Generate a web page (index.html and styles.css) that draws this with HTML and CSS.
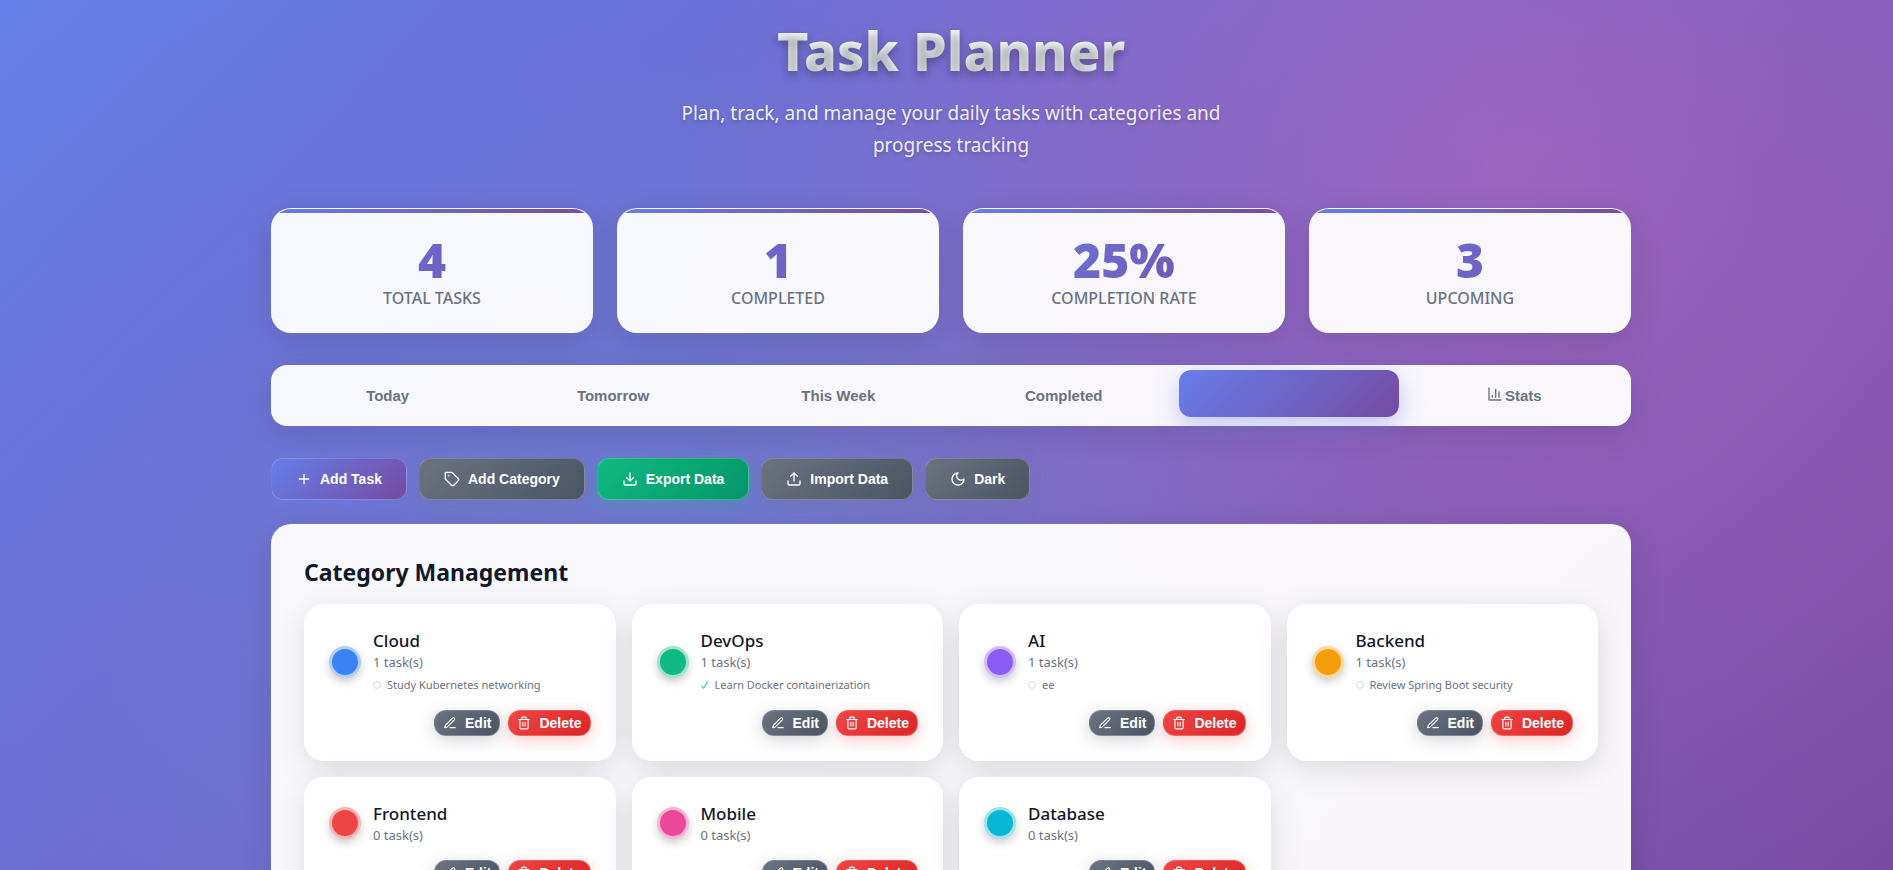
FILE: index.html
```html
<!DOCTYPE html>
<html lang="en">
<head>
<meta charset="utf-8">
<title>Task Planner</title>
<link rel="stylesheet" href="styles.css">
</head>
<body>
<svg class="sprite" aria-hidden="true">
  <symbol id="plus" viewBox="0 0 24 24"><path d="M5 12h14M12 5v14"/></symbol>
  <symbol id="tag" viewBox="0 0 24 24"><path d="M12.6 2.6A2 2 0 0 0 11.2 2H3a1 1 0 0 0-1 1v8.2a2 2 0 0 0 .6 1.4l8.7 8.7a2.4 2.4 0 0 0 3.4 0l6.6-6.6a2.4 2.4 0 0 0 0-3.4z"/><circle cx="7" cy="7" r=".4"/></symbol>
  <symbol id="download" viewBox="0 0 24 24"><path d="M12 3v12M7 10l5 5 5-5M3 15v4a2 2 0 0 0 2 2h14a2 2 0 0 0 2-2v-4"/></symbol>
  <symbol id="upload" viewBox="0 0 24 24"><path d="M12 15V3M7 8l5-5 5 5M3 15v4a2 2 0 0 0 2 2h14a2 2 0 0 0 2-2v-4"/></symbol>
  <symbol id="moon" viewBox="0 0 24 24"><path d="M12 3a6 6 0 0 0 9 9 9 9 0 1 1-9-9Z"/></symbol>
  <symbol id="pen" viewBox="0 0 24 24"><path d="M12 20h9M16.5 3.5a2.1 2.1 0 0 1 3 3L7 19l-4 1 1-4z"/></symbol>
  <symbol id="trash" viewBox="0 0 24 24"><path d="M3 6h18M19 6v14a2 2 0 0 1-2 2H7a2 2 0 0 1-2-2V6M8 6V4a2 2 0 0 1 2-2h4a2 2 0 0 1 2 2v2M10 11v6M14 11v6"/></symbol>
  <symbol id="chart" viewBox="0 0 24 24"><path d="M3 3v18h18M18 17V9M13 17V5M8 17v-3"/></symbol>
  <symbol id="ring" viewBox="0 0 8 8"><circle cx="4" cy="4" r="3.4"/></symbol>
  <symbol id="check" viewBox="0 0 8 8"><path d="M1 4.8 2.6 7.4 6.6.6"/></symbol>
</svg>
<div class="container">
  <header class="header">
    <h1>Task Planner</h1>
    <p>Plan, track, and manage your daily tasks with categories and progress tracking</p>
  </header>

  <section class="stats" aria-label="Overview">
    <div class="stat"><div class="stat-value">4</div><div class="stat-label">TOTAL TASKS</div></div>
    <div class="stat"><div class="stat-value">1</div><div class="stat-label">COMPLETED</div></div>
    <div class="stat"><div class="stat-value">25%</div><div class="stat-label">COMPLETION RATE</div></div>
    <div class="stat"><div class="stat-value">3</div><div class="stat-label">UPCOMING</div></div>
  </section>

  <nav class="tabs">
    <button class="tab">Today</button>
    <button class="tab">Tomorrow</button>
    <button class="tab">This Week</button>
    <button class="tab">Completed</button>
    <button class="tab tab-active" aria-label="Categories"></button>
    <button class="tab"><svg class="icon"><use href="#chart"/></svg>Stats</button>
  </nav>

  <div class="actions">
    <button class="btn btn-primary"><svg class="icon"><use href="#plus"/></svg>Add Task</button>
    <button class="btn btn-gray"><svg class="icon"><use href="#tag"/></svg>Add Category</button>
    <button class="btn btn-green"><svg class="icon"><use href="#download"/></svg>Export Data</button>
    <button class="btn btn-gray"><svg class="icon"><use href="#upload"/></svg>Import Data</button>
    <button class="btn btn-gray"><svg class="icon"><use href="#moon"/></svg>Dark</button>
  </div>

  <main class="panel">
    <h2>Category Management</h2>
    <div class="grid">
      <article class="card">
        <div class="card-body"><span class="dot dot-blue"></span><div><h3>Cloud</h3><p class="count">1 task(s)</p><p class="item"><svg class="mark ring"><use href="#ring"/></svg>Study Kubernetes networking</p></div></div>
        <div class="card-actions"><button class="btn btn-small btn-gray"><svg class="icon"><use href="#pen"/></svg>Edit</button><button class="btn btn-small btn-red"><svg class="icon"><use href="#trash"/></svg>Delete</button></div>
      </article>
      <article class="card">
        <div class="card-body"><span class="dot dot-green"></span><div><h3>DevOps</h3><p class="count">1 task(s)</p><p class="item"><svg class="mark check"><use href="#check"/></svg>Learn Docker containerization</p></div></div>
        <div class="card-actions"><button class="btn btn-small btn-gray"><svg class="icon"><use href="#pen"/></svg>Edit</button><button class="btn btn-small btn-red"><svg class="icon"><use href="#trash"/></svg>Delete</button></div>
      </article>
      <article class="card">
        <div class="card-body"><span class="dot dot-violet"></span><div><h3>AI</h3><p class="count">1 task(s)</p><p class="item"><svg class="mark ring"><use href="#ring"/></svg>ee</p></div></div>
        <div class="card-actions"><button class="btn btn-small btn-gray"><svg class="icon"><use href="#pen"/></svg>Edit</button><button class="btn btn-small btn-red"><svg class="icon"><use href="#trash"/></svg>Delete</button></div>
      </article>
      <article class="card">
        <div class="card-body"><span class="dot dot-amber"></span><div><h3>Backend</h3><p class="count">1 task(s)</p><p class="item"><svg class="mark ring"><use href="#ring"/></svg>Review Spring Boot security</p></div></div>
        <div class="card-actions"><button class="btn btn-small btn-gray"><svg class="icon"><use href="#pen"/></svg>Edit</button><button class="btn btn-small btn-red"><svg class="icon"><use href="#trash"/></svg>Delete</button></div>
      </article>
      <article class="card">
        <div class="card-body"><span class="dot dot-red"></span><div><h3>Frontend</h3><p class="count">0 task(s)</p></div></div>
        <div class="card-actions"><button class="btn btn-small btn-gray"><svg class="icon"><use href="#pen"/></svg>Edit</button><button class="btn btn-small btn-red"><svg class="icon"><use href="#trash"/></svg>Delete</button></div>
      </article>
      <article class="card">
        <div class="card-body"><span class="dot dot-pink"></span><div><h3>Mobile</h3><p class="count">0 task(s)</p></div></div>
        <div class="card-actions"><button class="btn btn-small btn-gray"><svg class="icon"><use href="#pen"/></svg>Edit</button><button class="btn btn-small btn-red"><svg class="icon"><use href="#trash"/></svg>Delete</button></div>
      </article>
      <article class="card">
        <div class="card-body"><span class="dot dot-cyan"></span><div><h3>Database</h3><p class="count">0 task(s)</p></div></div>
        <div class="card-actions"><button class="btn btn-small btn-gray"><svg class="icon"><use href="#pen"/></svg>Edit</button><button class="btn btn-small btn-red"><svg class="icon"><use href="#trash"/></svg>Delete</button></div>
      </article>
    </div>
  </main>
</div>
</body>
</html>
```
FILE: styles.css
```css
* { box-sizing: border-box; margin: 0; padding: 0; }

html { scrollbar-width: none; }

body {
  min-height: 100vh;
  padding: 16px 16px 32px 25px;
  font-family: "Noto Sans", "Open Sans", sans-serif;
  color: #111827;
  background:
    radial-gradient(circle at 20% 80%, rgba(120, 119, 198, 0.3) 0%, transparent 50%),
    radial-gradient(circle at 80% 20%, rgba(255, 119, 198, 0.3) 0%, transparent 50%),
    radial-gradient(circle at 40% 80%, rgba(120, 219, 255, 0.2) 0%, transparent 50%),
    linear-gradient(135deg, #667eea 0%, #764ba2 100%);
  background-attachment: fixed;
}

.sprite { display: none; }

.icon {
  width: 16px;
  height: 16px;
  flex: none;
  fill: none;
  stroke: currentColor;
  stroke-width: 2;
  stroke-linecap: round;
  stroke-linejoin: round;
}

.container { max-width: 1360px; margin: 0 auto; }

.header { text-align: center; }

.header h1 {
  font-size: 54px;
  line-height: 68px;
  font-weight: 800;
  color: transparent;
  background: linear-gradient(135deg, #ffffff, #f0f9ff);
  -webkit-background-clip: text;
  background-clip: text;
  text-shadow: 0 4px 8px rgba(0, 0, 0, 0.3);
}

.header p {
  max-width: 600px;
  margin: 13px auto 0;
  font-size: 19px;
  line-height: 32px;
  color: rgba(255, 255, 255, 0.9);
  text-shadow: 0 2px 4px rgba(0, 0, 0, 0.2);
}

.stats {
  display: grid;
  grid-template-columns: repeat(4, 1fr);
  gap: 24px;
  margin-top: 47px;
}

.stat {
  position: relative;
  overflow: hidden;
  padding: 24px 24px 22px;
  text-align: center;
  border: 1px solid rgba(255, 255, 255, 0.2);
  border-radius: 20px;
  background: rgba(255, 255, 255, 0.95);
  box-shadow: 0 8px 32px rgba(0, 0, 0, 0.12);
}

.stat::before {
  content: "";
  position: absolute;
  inset: 0 0 auto;
  height: 4px;
  background: linear-gradient(90deg, #667eea, #764ba2);
}

.stat-value {
  font-size: 48px;
  line-height: 54px;
  font-weight: 900;
  color: transparent;
  background: linear-gradient(135deg, #667eea, #764ba2);
  -webkit-background-clip: text;
  background-clip: text;
}

.stat-label {
  font-size: 16px;
  line-height: 23px;
  font-weight: 500;
  color: #6b7280;
}

.tabs {
  display: grid;
  grid-template-columns: repeat(6, 1fr);
  gap: 6px;
  margin-top: 32px;
  padding: 7px;
  border-radius: 16px;
  background: rgba(255, 255, 255, 0.95);
  box-shadow: 0 8px 32px rgba(0, 0, 0, 0.12);
}

.tab {
  display: flex;
  align-items: center;
  justify-content: center;
  height: 47px;
  border: 0;
  border-radius: 12px;
  background: none;
  font: bold 15px "Liberation Sans", Arial, sans-serif;
  color: #6b7280;
}

.tab .icon { margin: 0 2px 4px 0; }

.tab-active {
  background: linear-gradient(135deg, #667eea, #764ba2);
  box-shadow: 0 8px 25px rgba(102, 126, 234, 0.4);
  transform: translateY(-2px);
}

.actions { display: flex; flex-wrap: wrap; gap: 12px; margin-top: 32px; }

.btn {
  display: flex;
  align-items: center;
  gap: 8px;
  height: 42px;
  padding: 0 24px;
  border: 1px solid rgba(255, 255, 255, 0.2);
  border-radius: 12px;
  font: bold 14px "Liberation Sans", Arial, sans-serif;
  color: #ffffff;
}

.btn-primary { background: linear-gradient(135deg, #667eea, #764ba2); box-shadow: 0 4px 16px rgba(102, 126, 234, 0.3); }
.btn-gray { background: linear-gradient(135deg, #6b7280, #4b5563); box-shadow: 0 4px 16px rgba(107, 114, 128, 0.3); }
.btn-green { background: linear-gradient(135deg, #10b981, #059669); box-shadow: 0 4px 16px rgba(16, 185, 129, 0.3); }
.btn-red { background: linear-gradient(135deg, #ef4444, #dc2626); box-shadow: 0 4px 16px rgba(239, 68, 68, 0.3); }

.panel {
  margin-top: 24px;
  padding: 32px 33px;
  border-radius: 20px;
  background: rgba(255, 255, 255, 0.95);
  box-shadow: 0 8px 32px rgba(0, 0, 0, 0.12);
}

.panel h2 { font-size: 23px; line-height: 32px; font-weight: 700; }

.grid {
  display: grid;
  grid-template-columns: repeat(4, 1fr);
  gap: 16px;
  margin-top: 16px;
}

.card {
  align-self: start;
  padding: 25px;
  border-radius: 20px;
  background: #ffffff;
  box-shadow: 0 8px 32px rgba(0, 0, 0, 0.12);
}

.card-body { display: flex; align-items: center; gap: 12px; }

.dot {
  width: 32px;
  height: 32px;
  flex: none;
  border: 3px solid rgba(255, 255, 255, 0.6);
  border-radius: 50%;
  box-shadow: 0 4px 8px rgba(0, 0, 0, 0.2);
}

.dot-blue { background-color: #3b82f6; }
.dot-green { background-color: #10b981; }
.dot-violet { background-color: #8b5cf6; }
.dot-amber { background-color: #f59e0b; }
.dot-red { background-color: #ef4444; }
.dot-pink { background-color: #ec4899; }
.dot-cyan { background-color: #06b6d4; }

.card h3 { font-size: 17px; line-height: 24px; font-weight: 500; }

.count { font-size: 13px; line-height: 18px; color: #6b7280; }

.item {
  display: flex;
  align-items: center;
  gap: 6px;
  margin-top: 4px;
  font-size: 11px;
  line-height: 19px;
  color: #6b7280;
}

.mark { width: 8px; height: 8px; flex: none; fill: none; }
.ring { stroke: #d1d5db; }
.check { stroke: #10b981; }

.card-actions { display: flex; justify-content: flex-end; gap: 8px; margin-top: 16px; }

.btn-small { height: 26px; padding: 0 8px; }
.btn-small .icon { width: 14px; height: 14px; }
```
